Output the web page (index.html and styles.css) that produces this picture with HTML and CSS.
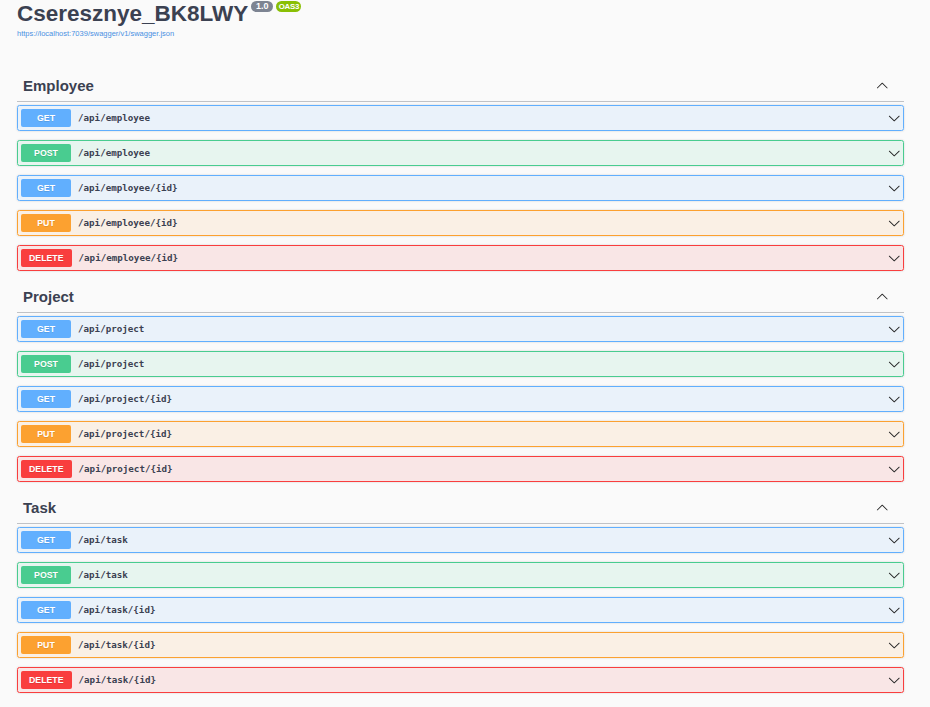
FILE: index.html
```html
<!DOCTYPE html>
<html lang="en">
<head>
<meta charset="utf-8">
<title>Swagger UI</title>
<link rel="stylesheet" href="styles.css">
</head>
<body>
<svg class="defs" xmlns="http://www.w3.org/2000/svg" aria-hidden="true">
  <symbol viewBox="0 0 20 20" id="arrow-down"><path d="M17.418 6.109c.272-.268.709-.268.979 0s.271.701 0 .969l-7.908 7.830c-.27.268-.707.268-.979 0l-7.908-7.830c-.27-.268-.27-.701 0-.969.271-.268.709-.268.979 0L10 13.25l7.418-7.141z"/></symbol>
  <symbol viewBox="0 0 20 20" id="arrow-up"><path d="M17.418 14.908c.272.268.709.268.979 0s.271-.701 0-.969l-7.908-7.830a.697.697 0 0 0-.979 0l-7.908 7.830c-.27.268-.27.701 0 .969.271.268.709.268.979 0L10 7.748l7.418 7.160z"/></symbol>
</svg>
<div class="page">
  <header class="info">
    <div class="title-row">
      <h2 class="title">Cseresznye_BK8LWY</h2>
      <span class="stamp stamp-ver">1.0</span>
      <span class="stamp stamp-oas">OAS3</span>
    </div>
    <a class="spec-link" href="#">https://localhost:7039/swagger/v1/swagger.json</a>
  </header>

  <section class="tag-section">
    <h3 class="tag"><span>Employee</span><svg class="arrow-up"><use href="#arrow-up"/></svg></h3>
    <div class="op op-get"><span class="method">GET</span><span class="path">/api/employee</span><svg class="arrow"><use href="#arrow-down"/></svg></div>
    <div class="op op-post"><span class="method">POST</span><span class="path">/api/employee</span><svg class="arrow"><use href="#arrow-down"/></svg></div>
    <div class="op op-get"><span class="method">GET</span><span class="path">/api/employee/{id}</span><svg class="arrow"><use href="#arrow-down"/></svg></div>
    <div class="op op-put"><span class="method">PUT</span><span class="path">/api/employee/{id}</span><svg class="arrow"><use href="#arrow-down"/></svg></div>
    <div class="op op-delete"><span class="method">DELETE</span><span class="path">/api/employee/{id}</span><svg class="arrow"><use href="#arrow-down"/></svg></div>
  </section>

  <section class="tag-section">
    <h3 class="tag"><span>Project</span><svg class="arrow-up"><use href="#arrow-up"/></svg></h3>
    <div class="op op-get"><span class="method">GET</span><span class="path">/api/project</span><svg class="arrow"><use href="#arrow-down"/></svg></div>
    <div class="op op-post"><span class="method">POST</span><span class="path">/api/project</span><svg class="arrow"><use href="#arrow-down"/></svg></div>
    <div class="op op-get"><span class="method">GET</span><span class="path">/api/project/{id}</span><svg class="arrow"><use href="#arrow-down"/></svg></div>
    <div class="op op-put"><span class="method">PUT</span><span class="path">/api/project/{id}</span><svg class="arrow"><use href="#arrow-down"/></svg></div>
    <div class="op op-delete"><span class="method">DELETE</span><span class="path">/api/project/{id}</span><svg class="arrow"><use href="#arrow-down"/></svg></div>
  </section>

  <section class="tag-section">
    <h3 class="tag"><span>Task</span><svg class="arrow-up"><use href="#arrow-up"/></svg></h3>
    <div class="op op-get"><span class="method">GET</span><span class="path">/api/task</span><svg class="arrow"><use href="#arrow-down"/></svg></div>
    <div class="op op-post"><span class="method">POST</span><span class="path">/api/task</span><svg class="arrow"><use href="#arrow-down"/></svg></div>
    <div class="op op-get"><span class="method">GET</span><span class="path">/api/task/{id}</span><svg class="arrow"><use href="#arrow-down"/></svg></div>
    <div class="op op-put"><span class="method">PUT</span><span class="path">/api/task/{id}</span><svg class="arrow"><use href="#arrow-down"/></svg></div>
    <div class="op op-delete"><span class="method">DELETE</span><span class="path">/api/task/{id}</span><svg class="arrow"><use href="#arrow-down"/></svg></div>
  </section>
</div>
</body>
</html>
```
FILE: styles.css
```css
html, body {
  margin: 0;
  padding: 0;
  background: #fafafa;
}

body {
  font-family: "Liberation Sans", Arial, sans-serif;
  color: #3b4151;
}

.defs {
  position: absolute;
  width: 0;
  height: 0;
  overflow: hidden;
}

.page {
  margin: 0 26px 0 17px;
}

/* ---------- info header ---------- */
.info {
  padding-top: 1px;
  margin-bottom: 31px;
}

.title-row {
  display: flex;
  align-items: flex-start;
}

.title {
  margin: 0;
  font-size: 22.5px;
  line-height: 26px;
  font-weight: 700;
  color: #3b4151;
}

.stamp {
  display: inline-block;
  height: 11px;
  line-height: 11px;
  margin-top: 0;
  font-size: 9px;
  font-weight: 700;
  color: #fff;
  text-align: center;
  white-space: nowrap;
  border-radius: 6px;
}

.stamp-ver {
  width: 22px;
  margin-left: 3px;
  background: #7d8492;
}

.stamp-oas {
  width: 25px;
  margin-left: 3px;
  font-size: 7.8px;
  letter-spacing: -0.2px;
  background: #89bf04;
}

.spec-link {
  display: block;
  margin-top: 2px;
  font-size: 7.5px;
  line-height: 9px;
  color: #4990e2;
  text-decoration: none;
}

/* ---------- tag sections ---------- */
.tag {
  display: flex;
  align-items: center;
  justify-content: space-between;
  height: 32px;
  margin: 0 0 3px;
  padding: 0 16px 0 6px;
  font-size: 15px;
  font-weight: 700;
  color: #3b4151;
  border-bottom: 1px solid rgba(59, 65, 81, 0.3);
}

.arrow-up,
.arrow {
  width: 12.5px;
  height: 12.5px;
  fill: #222;
  flex: none;
}

/* ---------- operation rows ---------- */
.op {
  display: flex;
  align-items: center;
  height: 18px;
  margin-bottom: 9px;
  padding: 3px;
  border: 1px solid;
  border-radius: 2.5px;
  box-shadow: 0 0 2px rgba(0, 0, 0, 0.19);
}

.method {
  flex: none;
  min-width: 50px;
  height: 18px;
  line-height: 18px;
  padding: 0 8px;
  box-sizing: border-box;
  font-size: 8.75px;
  font-weight: 700;
  color: #fff;
  text-align: center;
  border-radius: 2px;
  text-shadow: 0 1px 0 rgba(0, 0, 0, 0.1);
}

.path {
  flex: 1;
  padding-left: 7px;
  font-family: "DejaVu Sans Mono", "Liberation Mono", monospace;
  font-size: 9.2px;
  line-height: 16px;
  font-weight: 700;
  color: #3b4151;
}

.op-get {
  background: rgba(97, 175, 254, 0.1);
  border-color: #61affe;
}
.op-get .method { background: #61affe; }

.op-post {
  background: rgba(73, 204, 144, 0.1);
  border-color: #49cc90;
}
.op-post .method { background: #49cc90; }

.op-put {
  background: rgba(252, 161, 48, 0.1);
  border-color: #fca130;
}
.op-put .method { background: #fca130; }

.op-delete {
  background: rgba(249, 62, 62, 0.1);
  border-color: #f93e3e;
}
.op-delete .method { background: #f93e3e; }
```
